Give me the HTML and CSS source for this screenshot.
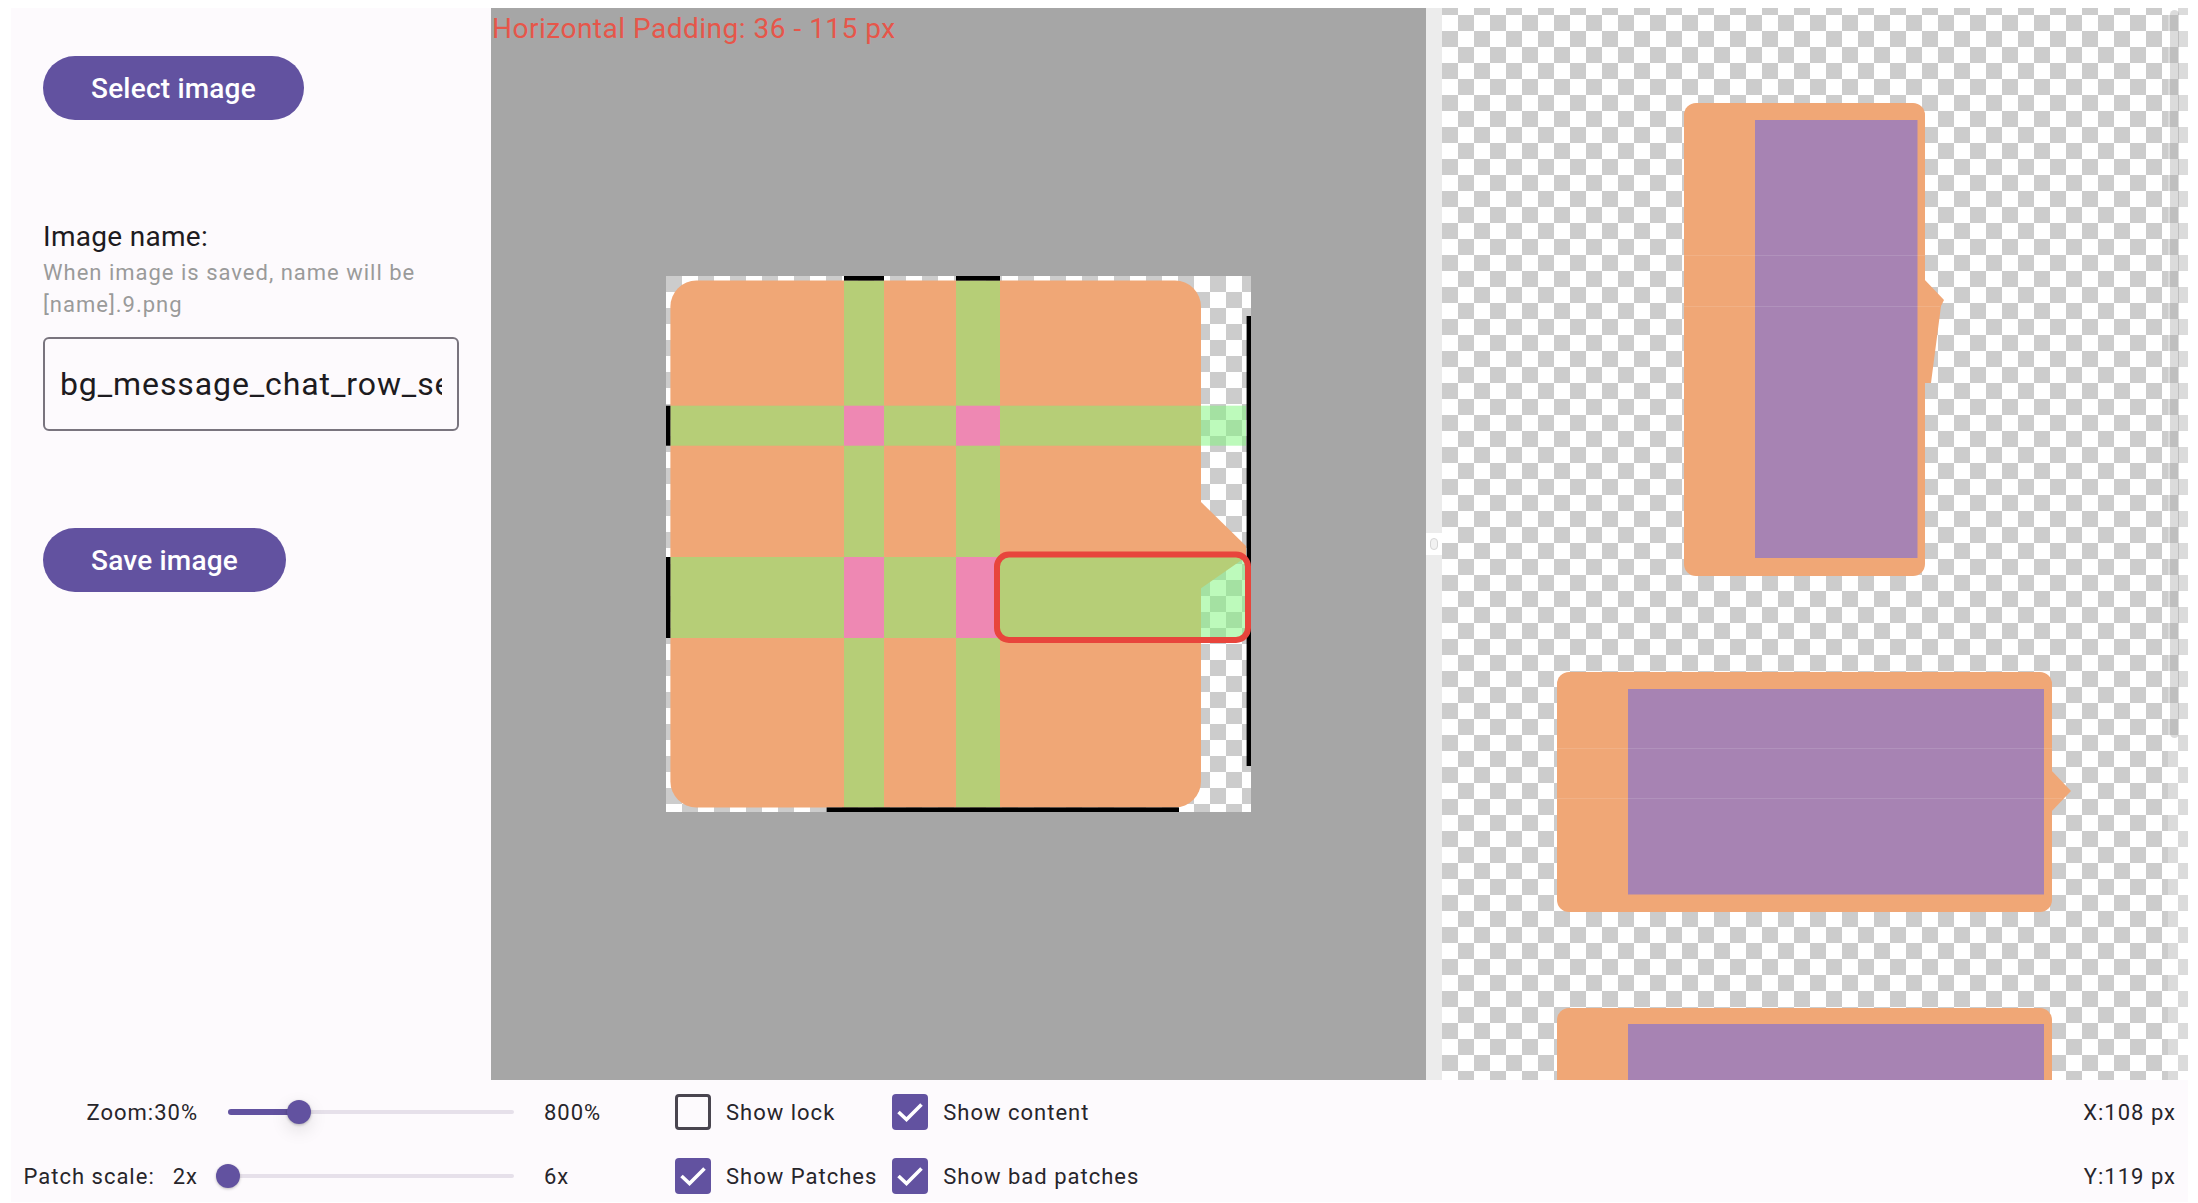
FILE: index.html
```html
<!DOCTYPE html>
<html lang="en">
<head>
<meta charset="utf-8">
<title>Nine-patch editor</title>
<link rel="stylesheet" href="styles.css">
</head>
<body>
<div class="app">
  <div class="top">
    <aside class="side">
      <button class="btn btn-select" type="button">Select image</button>
      <div class="field-label">Image name:</div>
      <div class="hint">When image is saved, name will be [name].9.png</div>
      <div class="name-input"><span class="name-text">bg_message_chat_row_send</span></div>
      <button class="btn btn-save" type="button">Save image</button>
    </aside>

    <main class="editor">
      <div class="pad-label">Horizontal Padding: 36 - 115 px</div>
      <svg class="np" width="585" height="536" viewBox="0 0 585 536">
        <defs>
          <pattern id="ck" width="32" height="32" patternUnits="userSpaceOnUse">
            <rect width="32" height="32" fill="#ffffff"/>
            <rect width="16" height="16" fill="#cccccc"/>
            <rect x="16" y="16" width="16" height="16" fill="#cccccc"/>
          </pattern>
        </defs>
        <rect width="585" height="536" fill="url(#ck)"/>
        <rect x="4.4" y="4.6" width="530.6" height="526.8" rx="26" fill="#f0a776"/>
        <polygon points="534,225 580,270 580,281 534,313" fill="#f0a776"/>
        <rect x="178" y="4.6" width="40" height="526.8" fill="rgba(124,245,120,0.5)"/>
        <rect x="290" y="4.6" width="44" height="526.8" fill="rgba(124,245,120,0.5)"/>
        <rect x="4.4" y="129.7" width="173.6" height="40" fill="rgba(124,245,120,0.5)"/>
        <rect x="218" y="129.7" width="72" height="40" fill="rgba(124,245,120,0.5)"/>
        <rect x="334" y="129.7" width="246" height="40" fill="rgba(124,245,120,0.5)"/>
        <rect x="4.4" y="281" width="173.6" height="81" fill="rgba(124,245,120,0.5)"/>
        <rect x="218" y="281" width="72" height="81" fill="rgba(124,245,120,0.5)"/>
        <rect x="334" y="281" width="246" height="81" fill="rgba(124,245,120,0.5)"/>
        <rect x="178" y="129.7" width="40" height="40" fill="#ee88b3"/>
        <rect x="290" y="129.7" width="44" height="40" fill="#ee88b3"/>
        <rect x="178" y="281" width="40" height="81" fill="#ee88b3"/>
        <rect x="290" y="281" width="44" height="81" fill="#ee88b3"/>
        <rect x="178" y="0" width="40" height="4.6" fill="#000"/>
        <rect x="290" y="0" width="44" height="4.6" fill="#000"/>
        <rect x="0" y="129.7" width="4.4" height="40" fill="#000"/>
        <rect x="0" y="281" width="4.4" height="81" fill="#000"/>
        <rect x="580.6" y="40" width="4.4" height="450" fill="#000"/>
        <rect x="160.5" y="531.4" width="352.5" height="4.6" fill="#000"/>
        <rect x="331" y="278.5" width="251" height="85.5" rx="12" fill="none" stroke="#e8453c" stroke-width="6"/>
      </svg>
    </main>

    <div class="divider"><div class="handle"><span class="grip"></span></div></div>

    <section class="preview">
      <svg class="bubble b1" width="241" height="473" viewBox="0 0 241 473">
        <rect width="241" height="473" rx="12" fill="#f0a776"/>
        <polygon points="240,176 260,197 257,203 247,280 240,280" fill="#f0a776"/>
        <rect x="71" y="17" width="162.5" height="438" fill="#a783b3"/>
        <rect x="0" y="152" width="241" height="1" fill="rgba(255,255,255,0.12)"/>
        <rect x="0" y="203" width="256" height="1" fill="rgba(255,255,255,0.12)"/>
      </svg>
      <svg class="bubble b2" width="495" height="240" viewBox="0 0 495 240">
        <rect width="495" height="240" rx="12" fill="#f0a776"/>
        <polygon points="494,98 514,119 494,140" fill="#f0a776"/>
        <rect x="71" y="17" width="416" height="205.5" fill="#a783b3"/>
        <rect x="0" y="76" width="495" height="1" fill="rgba(255,255,255,0.12)"/>
        <rect x="0" y="126" width="505" height="1" fill="rgba(255,255,255,0.12)"/>
      </svg>
      <svg class="bubble b3" width="495" height="240" viewBox="0 0 495 240">
        <rect width="495" height="240" rx="12" fill="#f0a776"/>
        <rect x="71" y="16" width="416" height="206" fill="#a783b3"/>
      </svg>
      <div class="scroll-track"></div>
      <div class="scroll-thumb"></div>
    </section>
  </div>

  <footer class="bar">
    <div class="lbl">Zoom:30%</div>
    <div class="slider">
      <div class="track"></div>
      <div class="active" style="width:71px"></div>
      <div class="thumb thumb-hover" style="left:71px"></div>
    </div>
    <div class="max">800%</div>
    <div class="cb"><span class="box"></span><span>Show lock</span></div>
    <div class="cb"><span class="box on"><svg width="36" height="36" viewBox="0 0 36 36"><path d="M6.5 18 L14.5 25.5 L29.5 10.5" fill="none" stroke="#fff" stroke-width="3.6"/></svg></span><span>Show content</span></div>
    <div class="spacer"></div>
    <div class="coord">X:108 px</div>

    <div class="lbl lbl-pair"><span>Patch scale:</span><span>2x</span></div>
    <div class="slider">
      <div class="track"></div>
      <div class="thumb" style="left:0px"></div>
    </div>
    <div class="max">6x</div>
    <div class="cb"><span class="box on"><svg width="36" height="36" viewBox="0 0 36 36"><path d="M6.5 18 L14.5 25.5 L29.5 10.5" fill="none" stroke="#fff" stroke-width="3.6"/></svg></span><span>Show Patches</span></div>
    <div class="cb"><span class="box on"><svg width="36" height="36" viewBox="0 0 36 36"><path d="M6.5 18 L14.5 25.5 L29.5 10.5" fill="none" stroke="#fff" stroke-width="3.6"/></svg></span><span>Show bad patches</span></div>
    <div class="spacer"></div>
    <div class="coord">Y:119 px</div>
  </footer>
</div>
</body>
</html>
```

FILE: styles.css
```css
* { box-sizing: border-box; }

html, body { background: #ffffff; }

body {
  margin: 8px 10px 1px 11px;
  font-family: Roboto, "Liberation Sans", sans-serif;
  color: #1d1b20;
}

.app {
  width: 2177px;
  height: 1194px;
  display: grid;
  grid-template-rows: 1072px 122px;
  background: #fdfafd;
}

.top {
  display: flex;
  min-height: 0;
}

/* ---------- left panel ---------- */
.side {
  width: 480px;
  flex: none;
  padding: 48px 32px 0 32px;
  display: flex;
  flex-direction: column;
  align-items: flex-start;
}

.btn {
  height: 64px;
  border: none;
  border-radius: 32px;
  background: #6252a0;
  color: #ffffff;
  font-family: Roboto, "Liberation Sans", sans-serif;
  font-size: 28px;
  font-weight: 500;
  letter-spacing: 0.2px;
  padding: 0 48px;
  cursor: pointer;
}

.field-label {
  margin-top: 100px;
  font-size: 28px;
  line-height: 34px;
  letter-spacing: 0.3px;
  color: #1d1b20;
}

.hint {
  margin-top: 3px;
  font-size: 22px;
  line-height: 31.5px;
  letter-spacing: 1px;
  color: #9a9a9a;
  width: 100%;
}

.name-input {
  margin-top: 17px;
  width: 416px;
  height: 94px;
  border: 2px solid #79747e;
  border-radius: 6px;
  padding: 0 15px;
  display: flex;
  align-items: center;
  overflow: hidden;
}

.name-text {
  display: block;
  width: 100%;
  overflow: hidden;
  white-space: nowrap;
  font-size: 32px;
  letter-spacing: 0.9px;
  color: #1d1b20;
  line-height: 40px;
}

.btn-save {
  margin-top: 97px;
}

/* ---------- editor ---------- */
.editor {
  width: 935px;
  flex: none;
  background: #a6a6a6;
  position: relative;
  display: flex;
  align-items: center;
  justify-content: center;
}

.pad-label {
  position: absolute;
  left: 1px;
  top: 4px;
  font-size: 28px;
  letter-spacing: 0.5px;
  color: #e6564a;
  line-height: 33px;
}

.np { display: block; }

/* ---------- divider ---------- */
.divider {
  width: 16px;
  flex: none;
  background: #ececec;
  display: flex;
  align-items: center;
}

.handle {
  width: 16px;
  height: 22px;
  background: #ffffff;
  display: flex;
  align-items: center;
  justify-content: center;
}

.grip {
  width: 8px;
  height: 12px;
  border: 1px solid #d6d6d6;
  border-radius: 4px;
  background: #f2f2f2;
}

/* ---------- preview ---------- */
.preview {
  width: 746px;
  flex: none;
  position: relative;
  overflow: hidden;
  background-color: #ffffff;
  background-image: conic-gradient(#ffffff 25%, #cccccc 0 50%, #ffffff 0 75%, #cccccc 0);
  background-size: 32px 32px;
  background-position: 0 -9px;
  display: flex;
  flex-direction: column;
  align-items: center;
  gap: 96px;
  padding: 95px 22px 0 0;
}

.bubble {
  display: block;
  flex: none;
  overflow: visible;
}

.scroll-track {
  position: absolute;
  right: 0;
  top: 0;
  bottom: 0;
  width: 20px;
  background: rgba(255, 255, 255, 0.3);
}

.scroll-thumb {
  position: absolute;
  right: 9px;
  top: 2px;
  width: 9px;
  height: 728px;
  border-radius: 5px;
  background: rgba(90, 90, 90, 0.22);
}

/* ---------- bottom bar ---------- */
.bar {
  display: grid;
  grid-template-columns: 217px 286px 161px auto auto 1fr auto;
  grid-template-rows: 36px 36px;
  row-gap: 28px;
  padding: 14px 12px 0 0;
  align-items: center;
  font-size: 22px;
  letter-spacing: 1px;
  color: #27252b;
}

.lbl {
  padding-right: 30px;
  text-align: right;
  white-space: nowrap;
}

.lbl-pair {
  display: flex;
  justify-content: flex-end;
  gap: 18px;
}

.slider {
  position: relative;
  height: 36px;
}

.track {
  position: absolute;
  left: 0;
  right: 0;
  top: 16px;
  height: 4px;
  border-radius: 2px;
  background: #e6e0ea;
}

.active {
  position: absolute;
  left: 0;
  top: 15px;
  height: 6px;
  border-radius: 3px;
  background: #6252a0;
}

.thumb {
  position: absolute;
  top: 6px;
  width: 24px;
  height: 24px;
  margin-left: -12px;
  border-radius: 50%;
  background: #6252a0;
  box-shadow: 0 1px 3px rgba(0, 0, 0, 0.25);
}

.thumb-hover {
  box-shadow: 0 1px 3px rgba(0, 0, 0, 0.25), 0 6px 18px rgba(0, 0, 0, 0.12);
}

.max {
  padding-left: 30px;
  white-space: nowrap;
}

.cb {
  display: flex;
  align-items: center;
  gap: 15px;
  padding-right: 15px;
  white-space: nowrap;
}

.box {
  width: 36px;
  height: 36px;
  flex: none;
  border: 3px solid #49454f;
  border-radius: 4px;
  display: block;
}

.box.on {
  border: none;
  background: #6252a0;
}

.box svg { display: block; }

.coord {
  text-align: right;
  white-space: nowrap;
}
```
